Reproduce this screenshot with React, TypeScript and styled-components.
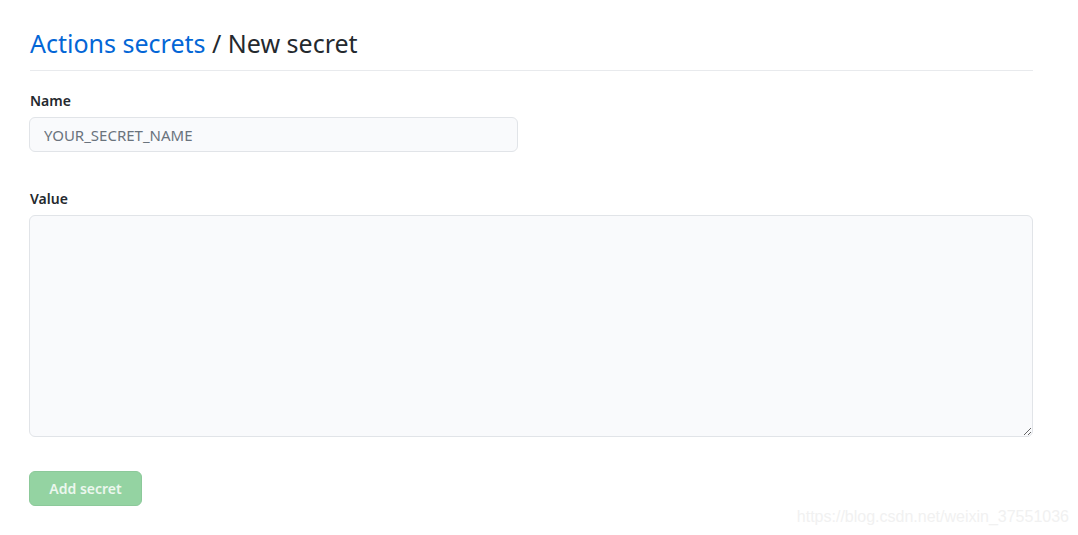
import styled, { createGlobalStyle } from "styled-components";

const GlobalStyle = createGlobalStyle`
    html, body {
        margin: 0;
        padding: 0;
        background: #ffffff;
    }
    body {
        font-family: "Noto Sans", "Open Sans", "Liberation Sans", sans-serif;
        color: #24292e;
    }
`;

const App = () => {
    return (
        <>
            <GlobalStyle />
            <StyledPage>
                <StyledSubhead>
                    <StyledHeading>
                        <StyledCrumb href="#">Actions secrets</StyledCrumb> / New secret
                    </StyledHeading>
                </StyledSubhead>
                <StyledForm onSubmit={(e) => e.preventDefault()}>
                    <StyledGroup>
                        <StyledLabel htmlFor="secret_name">Name</StyledLabel>
                        <StyledInput id="secret_name" placeholder="YOUR_SECRET_NAME" />
                    </StyledGroup>
                    <StyledGroup>
                        <StyledLabel htmlFor="secret_value">Value</StyledLabel>
                        <StyledTextarea id="secret_value" />
                    </StyledGroup>
                    <StyledButton type="submit" disabled>
                        Add secret
                    </StyledButton>
                </StyledForm>
                <StyledWatermark>https://blog.csdn.net/weixin_37551036</StyledWatermark>
            </StyledPage>
        </>
    );
};
export default App;

const StyledPage = styled.main({
    position: "relative",
    width: 1078,
    height: 535,
    boxSizing: "border-box",
    padding: "24px 45px 0 30px",
});

const StyledSubhead = styled.div({
    borderBottom: "1px solid #e8eaed",
    paddingBottom: 8,
    marginBottom: 20,
});

const StyledHeading = styled.h2({
    margin: 0,
    fontSize: 25,
    fontWeight: 400,
    lineHeight: "38px",
    color: "#24292e",
});

const StyledCrumb = styled.a({
    color: "#0366d6",
    textDecoration: "none",
});

const StyledForm = styled.form({
    display: "flex",
    flexDirection: "column",
    alignItems: "flex-start",
});

const StyledGroup = styled.div({
    display: "flex",
    flexDirection: "column",
    width: "100%",
    marginBottom: 37,
    "&:last-of-type": {
        marginBottom: 34,
    },
});

const StyledLabel = styled.label({
    fontSize: 14,
    fontWeight: 600,
    lineHeight: "20px",
    marginBottom: 6,
    color: "#24292e",
});

const StyledInput = styled.input({
    width: 489,
    height: 35,
    boxSizing: "border-box",
    marginLeft: -1,
    padding: "0 14px",
    fontFamily: "inherit",
    fontSize: 15,
    color: "#24292e",
    background: "#f9fafc",
    border: "1px solid #e1e4e8",
    borderRadius: 6,
    outline: "none",
    "&::placeholder": {
        color: "#6a737d",
    },
});

const StyledTextarea = styled.textarea({
    width: 1004,
    height: 222,
    boxSizing: "border-box",
    marginLeft: -1,
    padding: 10,
    fontFamily: "inherit",
    fontSize: 14,
    background: "#f9fafc",
    border: "1px solid #e1e4e8",
    borderRadius: 6,
    outline: "none",
    resize: "vertical",
});

const StyledButton = styled.button({
    width: 113,
    height: 35,
    marginLeft: -1,
    padding: 0,
    fontFamily: "inherit",
    fontSize: 14,
    fontWeight: 600,
    color: "#ecf7ee",
    background: "#94d3a2",
    border: "1px solid #8cc99a",
    borderRadius: 6,
    cursor: "default",
});

const StyledWatermark = styled.div({
    position: "absolute",
    right: 9,
    bottom: 9,
    fontFamily: '"Liberation Sans", Arial, sans-serif',
    fontSize: 16,
    color: "#f1f1f1",
});
